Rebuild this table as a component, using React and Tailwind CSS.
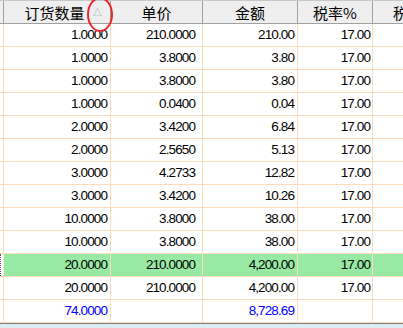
import React from "react";

const rows = [
  ["1.0000", "210.0000", "210.00", "17.00"],
  ["1.0000", "3.8000", "3.80", "17.00"],
  ["1.0000", "3.8000", "3.80", "17.00"],
  ["1.0000", "0.0400", "0.04", "17.00"],
  ["2.0000", "3.4200", "6.84", "17.00"],
  ["2.0000", "2.5650", "5.13", "17.00"],
  ["3.0000", "4.2733", "12.82", "17.00"],
  ["3.0000", "3.4200", "10.26", "17.00"],
  ["10.0000", "3.8000", "38.00", "17.00"],
  ["10.0000", "3.8000", "38.00", "17.00"],
  ["20.0000", "210.0000", "4,200.00", "17.00"],
  ["20.0000", "210.0000", "4,200.00", "17.00"],
];

const num = "font-['Liberation_Sans',sans-serif] text-[13.5px] tracking-[-0.9px] leading-none";

function DataRow({ cells, active, total }) {
  const bg = active ? "bg-[#97e9a3]" : "bg-white";
  const color = total ? "text-[#0000ff]" : "text-black";
  return (
    <div className={`flex h-[23px] border-b border-[#fddcbc] ${bg} ${color} ${num}`}>
      <div className={`w-[4px] shrink-0 border-r border-[#fddcbc] bg-white ${active ? "border-l border-dotted border-l-[#555]" : ""}`} />
      <div className="w-[107px] shrink-0 border-r border-[#fddcbc] flex items-center justify-end pr-[3px]">{cells[0]}</div>
      <div className="w-[92px] shrink-0 border-r border-[#fddcbc] flex items-center justify-end pr-[7px]">{cells[1]}</div>
      <div className="w-[95px] shrink-0 border-r border-[#fddcbc] flex items-center justify-end pr-[3px]">{cells[2]}</div>
      <div className="w-[75px] shrink-0 border-r border-[#fddcbc] flex items-center justify-end pr-[2px]">{cells[3]}</div>
      <div className="flex-1" />
    </div>
  );
}

export default function App() {
  const head = "shrink-0 border-r border-[#a0a0a0] flex items-center justify-center";
  return (
    <div className="w-[403px] h-[328px] overflow-hidden bg-[#dcecf4] relative">
      {/* Header */}
      <div className="flex h-[24px] bg-[#efefef] border-t border-[#c8c8c8] border-b border-b-[#a0a0a0] text-[15px] text-black font-['Noto_Sans_CJK_SC',sans-serif] leading-none">
        <div className={`w-[4px] ${head}`} />
        <div className={`w-[107px] ${head} relative`}>
          <span className="ml-[-5px]">订货数量</span>
          <span className="absolute left-[89px] top-[7px] text-[9px] text-[#9a9a9a]">△</span>
        </div>
        <div className={`w-[92px] ${head}`}>单价</div>
        <div className={`w-[95px] ${head}`}>金额</div>
        <div className={`w-[75px] ${head}`}>税率%</div>
        <div className="flex-1 flex items-center pl-[20px] overflow-hidden whitespace-nowrap">税</div>
      </div>

      {rows.map((r, i) => (
        <DataRow key={i} cells={r} active={i === 10} />
      ))}
      <DataRow cells={["74.0000", "", "8,728.69", ""]} total />
      <div className="h-[1px] bg-[#808080]" />

      {/* red annotation circle */}
      <div className="absolute left-[87px] top-[-3px] w-[26px] h-[35px] rounded-[50%] border-2 border-[#e8262a]" />
    </div>
  );
}
